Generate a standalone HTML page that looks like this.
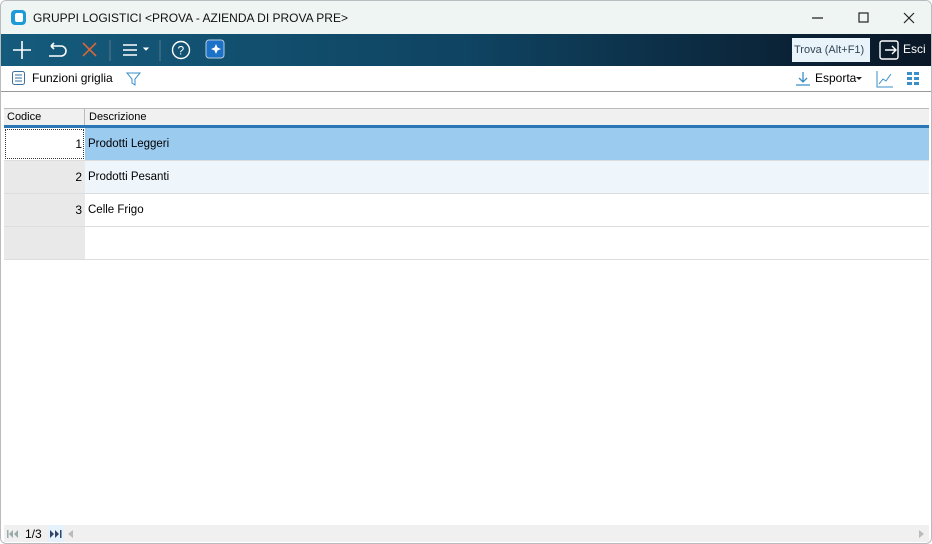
<!DOCTYPE html>
<html><head><style>
*{margin:0;padding:0;box-sizing:border-box}
body{width:932px;height:544px;overflow:hidden;font-family:"Liberation Sans",sans-serif;background:#fff;position:relative;font-size:12px;color:#000}
.win{position:absolute;left:0;top:0;width:932px;height:544px;border:1px solid #b9bcbf;border-radius:6px;overflow:hidden;background:#fff}
.title{position:absolute;left:0;top:0;width:930px;height:33px;background:#eff5f2}
.title .t{position:absolute;left:32px;top:10px;font-size:12px;color:#111}
.tb{position:absolute;left:0;top:33px;width:930px;height:32px;background:linear-gradient(90deg,#155b7c 0%,#0f4462 50%,#0b2236 85%,#0a1726 100%)}
.tb2{position:absolute;left:0;top:65px;width:930px;height:26px;background:#fff;border-bottom:1px solid #999}
.hdr{position:absolute;left:3px;top:107px;width:925px;height:20px;background:#f0f0f0;border-top:1px solid #bbb;border-bottom:3px solid #2a77b8}
.row{position:absolute;left:3px;width:925px;height:33px;border-bottom:1px solid #ddd}
.c1{position:absolute;left:0;top:0;width:81px;height:32px;background:#e9e9e9;text-align:right;padding-right:3px;line-height:32px}
.c2{position:absolute;left:81px;top:0;right:0;height:32px;line-height:32px;padding-left:3px;font-size:11.5px}
.foot{position:absolute;left:3px;top:524px;width:925px;height:17px;background:#f0f0f0}
</style></head><body><div class="win">
<div class="title">
<svg style="position:absolute;left:10px;top:9px" width="15" height="15"><rect x="0" y="0" width="15" height="15" rx="4" fill="#1e9ad6"/><rect x="4" y="3" width="8" height="9" rx="2" fill="#fff"/></svg>
<div class="t">GRUPPI LOGISTICI &lt;PROVA - AZIENDA DI PROVA PRE&gt;</div>
<svg style="position:absolute;left:810px;top:10px" width="110" height="14" stroke="#222" fill="none" stroke-width="1.2"><line x1="1" y1="7" x2="12" y2="7"/><rect x="48" y="2" width="9" height="9"/><path d="M93 2l10 10M103 2l-10 10"/></svg>
</div>
<div class="tb">
<svg width="240" height="32" fill="none" stroke-width="1.6">
<path d="M21 7v18M12 16h18" stroke="#fff"/>
<path d="M50 12h10a5 5 0 0 1 0 10h-12M50 12l3-3M50 12l3 3" stroke="#fff"/>
<path d="M82 9l13 13M95 9l-13 13" stroke="#d2673a"/>
<line x1="109" y1="6" x2="109" y2="27" stroke="#5d7a8c" stroke-width="1"/>
<path d="M122 11h14M122 16h14M122 21h14" stroke="#fff"/><path d="M143 14l2 2 2-2z" fill="#fff" stroke="#fff" stroke-width="1"/>
<line x1="159" y1="6" x2="159" y2="27" stroke="#5d7a8c" stroke-width="1"/>
<circle cx="180" cy="16" r="8.5" stroke="#fff" stroke-width="1.4"/>
<text x="176.5" y="20.5" fill="#fff" stroke="none" font-size="12" font-family="Liberation Sans">?</text>
<rect x="205" y="6" width="18" height="18" rx="3" fill="#1b72c8" stroke="#bcd" stroke-width="1"/>
<path d="M215 10l1.5 3.5 3.5 1.5-3.5 1.5-1.5 3.5-1.5-3.5-3.5-1.5 3.5-1.5z" fill="#fff" stroke="none"/>
</svg>
<div style="position:absolute;left:791px;top:4px;width:78px;height:24px;background:#e9f4fa;color:#345;line-height:24px;padding-left:2px;font-size:11px;white-space:nowrap;overflow:hidden">Trova (Alt+F1)</div>
<svg style="position:absolute;left:878px;top:6px" width="22" height="20" fill="none" stroke="#fff" stroke-width="1.4"><rect x="1" y="1" width="18" height="18" rx="2"/><path d="M6 10h11M13 6l4 4-4 4"/></svg>
<div style="position:absolute;left:902px;top:8px;color:#fff;font-size:12px">Esci</div>
</div>
<div class="tb2">
<svg style="position:absolute;left:11px;top:5px" width="14" height="15" fill="none" stroke="#3a6fa0"><rect x="0.5" y="0.5" width="12" height="13" rx="2"/><path d="M3 4h7M3 7h7M3 10h7"/></svg>
<div style="position:absolute;left:31px;top:5px;font-size:12px">Funzioni griglia</div>
<svg style="position:absolute;left:125px;top:5px" width="16" height="16" fill="none" stroke="#3a8fc8"><path d="M1 2h13l-5 6v6l-3-2v-4z"/></svg>
<svg style="position:absolute;left:794px;top:5px" width="16" height="16" fill="none" stroke="#3a8fc8" stroke-width="1.3"><path d="M8 1v10M4 7l4 4 4-4M1 14h14"/></svg>
<div style="position:absolute;left:814px;top:5px;font-size:12px">Esporta</div>
<svg style="position:absolute;left:855px;top:10px" width="7" height="5"><path d="M0 1h6l-3 3z" fill="#222"/></svg>
<svg style="position:absolute;left:875px;top:4px" width="18" height="18" fill="none" stroke="#3a8fc8"><path d="M1 1v16h16M3 14l4-5 3 2 5-7"/></svg>
<svg style="position:absolute;left:906px;top:6px" width="13" height="13" fill="#3a8fc8"><rect x="0" y="0" width="5" height="3"/><rect x="7" y="0" width="5" height="3"/><rect x="0" y="5" width="5" height="3"/><rect x="7" y="5" width="5" height="3"/><rect x="0" y="10" width="5" height="3"/><rect x="7" y="10" width="5" height="3"/></svg>
</div>
<div class="hdr">
<div style="position:absolute;left:0;top:0;width:81px;height:16px;border-right:1px solid #bbb;padding-left:3px;line-height:17px;font-size:11px">Codice</div>
<div style="position:absolute;left:85px;top:0;line-height:17px;font-size:11px">Descrizione</div>
</div>
<div class="row" style="top:127px"><div class="c1" style="background:#fff;outline:1px dotted #333;outline-offset:-2px">1</div><div class="c2" style="background:#9ccbf0">Prodotti Leggeri</div></div>
<div class="row" style="top:160px"><div class="c1">2</div><div class="c2" style="background:#eef6fc">Prodotti Pesanti</div></div>
<div class="row" style="top:193px"><div class="c1">3</div><div class="c2">Celle Frigo</div></div>
<div class="row" style="top:226px"><div class="c1"></div><div class="c2"></div></div>
<div class="foot">
<svg style="position:absolute;left:3px;top:5px" width="12" height="8" fill="#9aa"><rect x="0" y="0" width="1.5" height="8"/><path d="M6 0v8l-4-4zM11 0v8l-4-4z"/></svg>
<div style="position:absolute;left:21px;top:2px;font-size:12px">1/3</div>
<div style="position:absolute;left:44px;top:0;width:16px;height:17px;background:#e6f2fb"></div>
<svg style="position:absolute;left:46px;top:5px" width="12" height="8" fill="#346"><path d="M0 0v8l4-4zM5 0v8l4-4z"/><rect x="10" y="0" width="1.5" height="8"/></svg>
<svg style="position:absolute;left:64px;top:5px" width="6" height="8" fill="#bbb"><path d="M5 0v8l-5-4z"/></svg>
<svg style="position:absolute;left:915px;top:5px" width="6" height="8" fill="#bbb"><path d="M0 0v8l5-4z"/></svg>
</div>
</div></body></html>
